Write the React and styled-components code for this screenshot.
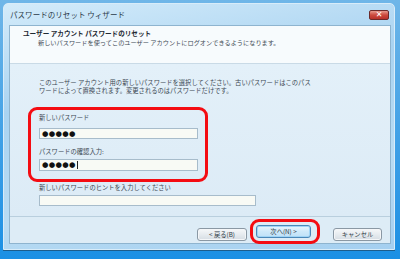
import React from 'react';
import styled, { createGlobalStyle } from 'styled-components';

const GlobalStyle = createGlobalStyle`
  html, body {
    margin: 0;
    padding: 0;
    width: 400px;
    height: 259px;
    overflow: hidden;
    background: linear-gradient(180deg, #6fb6e8 0%, #3a9ee6 60%, #1b90e4 100%);
    font-family: "Noto Sans CJK JP", "Noto Sans", sans-serif;
  }
`;

const Frame = styled.div`
  margin: 3px 0 0 3px;
  width: 392px;
  height: 247px;
  box-sizing: border-box;
  display: flex;
  flex-direction: column;
  padding: 0 3px 5px 5px;
  border: 1px solid #d8ecf9;
  border-radius: 5px 5px 0 0;
  background: linear-gradient(170deg, #d3ebfa 0%, #a9d3f1 35%, #b9dcf3 70%, #a4cff0 100%);
  box-shadow: 0 1px 0 #1c5d8c;
`;

const TitleBar = styled.div`
  height: 21px;
  display: flex;
  align-items: center;
  justify-content: space-between;
  padding-left: 1px;
`;

const Title = styled.span`
  font-size: 7.5px;
  color: #2a3a48;
  letter-spacing: 0.05px;
`;

const CloseButton = styled.div`
  width: 20px;
  height: 10px;
  margin-right: 2px;
  margin-top: 1px;
  box-sizing: border-box;
  border: 1px solid #6b2a2a;
  border-radius: 2px;
  background: linear-gradient(180deg, #e89a8e 0%, #cc4a3e 50%, #b8302a 100%);
  color: #fff;
  font-size: 8px;
  font-weight: bold;
  line-height: 8px;
  text-align: center;
  font-family: "DejaVu Sans", sans-serif;
`;

const Client = styled.div`
  flex: 1;
  display: flex;
  flex-direction: column;
  border: 1px solid #8eb4cf;
  background: #e0eef8;
`;

const Header = styled.div`
  height: 34px;
  padding: 3px 0 0 13px;
  background: #f7fbfd;
  border-bottom: 1px solid #c9dae6;
`;

const HeaderTitle = styled.div`
  font-size: 6.6px;
  line-height: 9px;
  font-weight: bold;
  color: #1f2a33;
`;

const HeaderSub = styled.div`
  font-size: 6.2px;
  line-height: 9px;
  margin-left: 15px;
  color: #3e4a55;
`;

const Body = styled.div`
  flex: 1;
  padding: 15px 0 0 29px;
  background: linear-gradient(180deg, #e3f0f9 0%, #dcebf6 100%);
`;

const Text = styled.div`
  font-size: 6.3px;
  line-height: 8px;
  color: #3c4853;
  margin-top: ${p => p.$top || 0}px;
`;

const Group = styled.div`
  margin: 12px 0 0 -11px;
  width: 180px;
  box-sizing: border-box;
  border: 3px solid #f40c12;
  border-radius: 9px;
  padding: 3px 7px 8px 8px;
`;

const Field = styled.div`
  width: ${p => p.$width}px;
  height: ${p => p.$height || 11}px;
  margin-top: ${p => p.$top || 0}px;
  box-sizing: border-box;
  border: 1px solid #a7bccb;
  background: #f8faf5;
  display: flex;
  align-items: center;
  padding-left: 2px;
`;

const Dots = styled.span`
  font-size: 7.4px;
  line-height: 8px;
  color: #111;
  letter-spacing: 0.3px;
  font-family: "DejaVu Sans", sans-serif;
`;

const Caret = styled.span`
  display: inline-block;
  width: 1px;
  height: 8px;
  margin-left: 1px;
  background: #222;
`;

const Footer = styled.div`
  height: 27px;
  border-top: 1px solid #b9cfde;
  display: flex;
  align-items: flex-start;
  justify-content: flex-end;
  padding: 11px 8px 0 0;
  box-sizing: border-box;
  background: #ddecf6;
`;

const Button = styled.div`
  width: ${p => p.$width}px;
  height: 13px;
  box-sizing: border-box;
  margin-left: ${p => p.$gap || 0}px;
  border: 1px solid ${p => (p.$primary ? '#4a87b8' : '#8a98a4')};
  border-radius: 3px;
  background: ${p =>
    p.$primary
      ? 'linear-gradient(180deg, #eaf6fd 0%, #cde9fa 50%, #bfe1f7 100%)'
      : 'linear-gradient(180deg, #f6f8f9 0%, #e6ebef 50%, #d6dde3 100%)'};
  box-shadow: inset 0 0 0 1px ${p => (p.$primary ? '#9fd4f5' : '#f4f6f8')};
  font-size: 6.3px;
  line-height: 11px;
  text-align: center;
  color: #2f3a44;
`;

/* red marker drawn round the default button; negative margins keep it out of the flow */
const Ring = styled.div`
  margin: -9px -9px -9px ${p => p.$gap - 6}px;
  padding: 3px 6px 3px 3px;
  border: 3px solid #f40c12;
  border-radius: 9px;
`;

export default function App() {
  return (
    <>
      <GlobalStyle />
      <Frame>
        <TitleBar>
          <Title>パスワードのリセット ウィザード</Title>
          <CloseButton>✕</CloseButton>
        </TitleBar>
        <Client>
          <Header>
            <HeaderTitle>ユーザー アカウント パスワードのリセット</HeaderTitle>
            <HeaderSub>新しいパスワードを使ってこのユーザー アカウントにログオンできるようになります。</HeaderSub>
          </Header>
          <Body>
            <Text>
              このユーザー アカウント用の新しいパスワードを選択してください。古いパスワードはこのパス
              <br />
              ワードによって置換されます。変更されるのはパスワードだけです。
            </Text>
            <Group>
              <Text $top={1}>新しいパスワード</Text>
              <Field $width={159} $top={6}>
                <Dots>●●●●●</Dots>
              </Field>
              <Text $top={9}>パスワードの確認入力:</Text>
              <Field $width={159} $height={12} $top={3}>
                <Dots>●●●●●</Dots>
                <Caret />
              </Field>
            </Group>
            <Text $top={2}>新しいパスワードのヒントを入力してください</Text>
            <Field $width={217} $top={3} />
          </Body>
          <Footer>
            <Button $width={50}>&lt; 戻る(B)</Button>
            <Ring $gap={9}>
              <Button $width={55} $primary>次へ(N) &gt;</Button>
            </Ring>
            <Button $width={49} $gap={22}>キャンセル</Button>
          </Footer>
        </Client>
      </Frame>
    </>
  );
}
